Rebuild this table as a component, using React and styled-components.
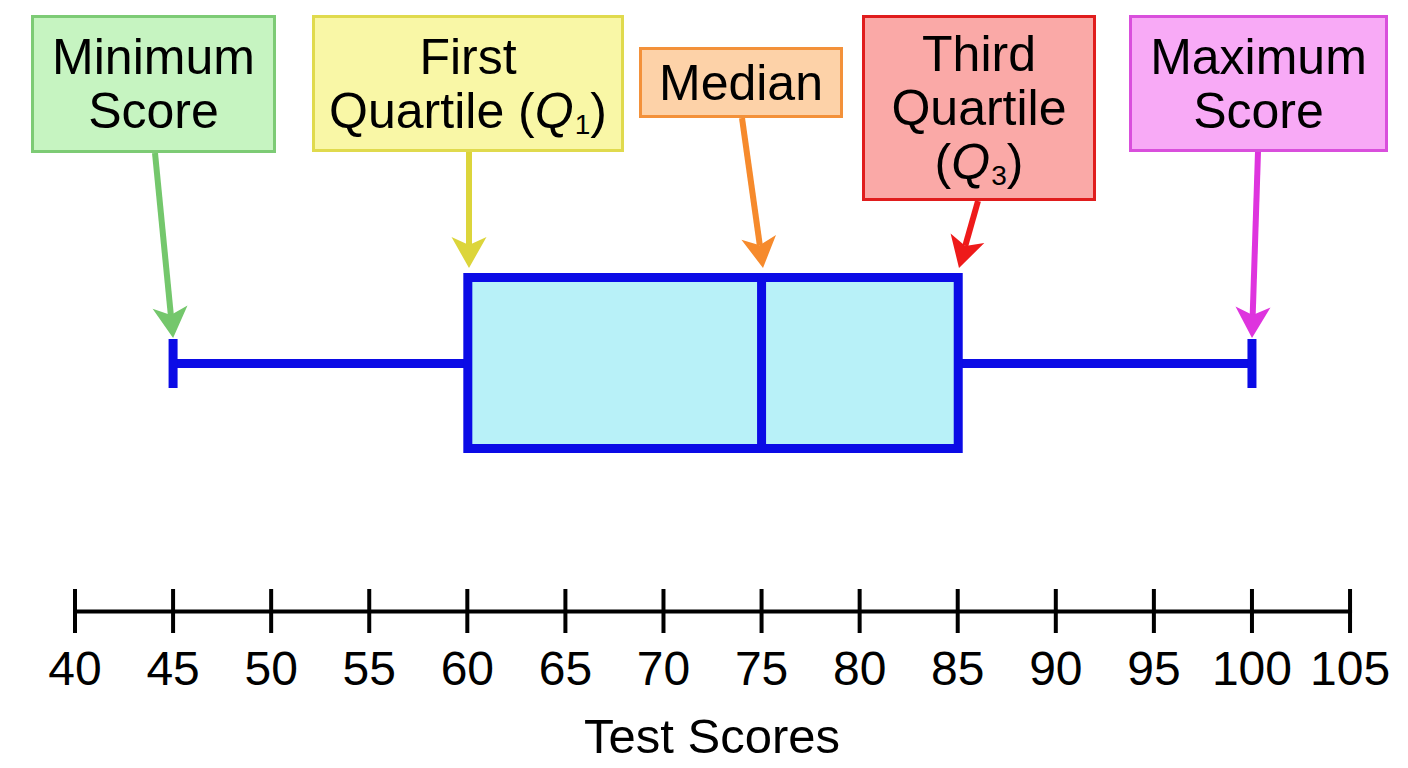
import React from 'react';
import styled, { createGlobalStyle } from 'styled-components';

const GlobalStyle = createGlobalStyle`
  html, body {
    margin: 0;
    padding: 0;
    background: #ffffff;
  }
  body {
    font-family: "Liberation Sans", Arial, Helvetica, sans-serif;
    color: #000;
  }
`;

const Page = styled.div`
  width: 1408px;
  height: 768px;
  display: flex;
  flex-direction: column;
  background: #ffffff;
  overflow: hidden;
`;

const Chart = styled.div`
  position: relative;
  height: 644px;
  flex: none;
`;

const Plot = styled.svg`
  display: block;
`;

// callouts sit on the chart canvas at the spot they point from
const Callout = styled.div`
  position: absolute;
  left: ${p => p.$left}px;
  top: ${p => p.$top}px;
  width: ${p => p.$width}px;
  height: ${p => p.$height}px;
  box-sizing: border-box;
  border: 3px solid ${p => p.$edge};
  background: ${p => p.$fill};
  display: flex;
  flex-direction: column;
  align-items: center;
  justify-content: center;
  font-size: 50px;
  line-height: 54px;
  text-align: center;
`;

const Line = styled.span`
  display: block;
  white-space: nowrap;
`;

const Q = styled.i`
  font-style: italic;
`;

const Sub = styled.sub`
  font-size: 28px;
  line-height: 0;
  vertical-align: -6px;
  margin-left: 1px;
`;

const TickRow = styled.div`
  display: flex;
  padding-left: 26px;
  height: 50px;
  flex: none;
`;

const TickLabel = styled.div`
  width: 98.08px;
  flex: none;
  text-align: center;
  font-size: 48px;
  line-height: 50px;
`;

const AxisTitle = styled.div`
  margin-top: 17px;
  padding-left: 16px;
  text-align: center;
  font-size: 49px;
  line-height: 50px;
`;

const X0 = 75;
const STEP = 98.08;
const xOf = v => X0 + ((v - 40) / 5) * STEP;

const ticks = [40, 45, 50, 55, 60, 65, 70, 75, 80, 85, 90, 95, 100, 105];

const callouts = [
  { left: 31, top: 15, width: 245, height: 138, fill: '#c6f4c1', edge: '#7dcb75', lines: ['Minimum', 'Score'] },
  { left: 312, top: 15, width: 312, height: 137, fill: '#f9f7a6', edge: '#e0da4d', lines: ['First', 'Q1'] },
  { left: 639, top: 47, width: 204, height: 71, fill: '#fdd2a8', edge: '#f3913a', lines: ['Median'] },
  { left: 862, top: 15, width: 234, height: 186, fill: '#faa9a7', edge: '#e01d1d', lines: ['Third', 'Quartile', 'Q3'] },
  { left: 1129, top: 15, width: 259, height: 137, fill: '#f8aaf6', edge: '#d94fdc', lines: ['Maximum', 'Score'] },
];

const arrows = [
  { from: [155, 153], to: [xOf(45), 338], color: '#74c76c' },
  { from: [469, 152], to: [469, 268], color: '#dcd53b' },
  { from: [742, 118], to: [763, 268], color: '#f68a2c' },
  { from: [978, 201], to: [959, 268], color: '#ee1a1a' },
  { from: [1258, 152], to: [xOf(100), 338], color: '#de34de' },
];

function arrowParts([x1, y1], [x2, y2]) {
  const dx = x2 - x1;
  const dy = y2 - y1;
  const len = Math.hypot(dx, dy);
  const ux = dx / len;
  const uy = dy / len;
  const px = -uy;
  const py = ux;
  const head = 31;
  const half = 17.5;
  const notch = 8;
  const bx = x2 - ux * head;
  const by = y2 - uy * head;
  const nx = x2 - ux * (head - notch);
  const ny = y2 - uy * (head - notch);
  const points = [
    [x2, y2],
    [bx + px * half, by + py * half],
    [nx, ny],
    [bx - px * half, by - py * half],
  ]
    .map(pt => pt.map(n => n.toFixed(1)).join(','))
    .join(' ');
  return { shaftEnd: [nx, ny], points };
}

function CalloutText({ line }) {
  if (line === 'Q1') {
    return (
      <Line>
        Quartile (<Q>Q</Q>
        <Sub>1</Sub>)
      </Line>
    );
  }
  if (line === 'Q3') {
    return (
      <Line>
        (<Q>Q</Q>
        <Sub>3</Sub>)
      </Line>
    );
  }
  return <Line>{line}</Line>;
}

function BoxPlot() {
  const blue = '#0b0be6';
  const left = xOf(60);
  const right = xOf(85);
  return (
    <Plot width="1408" height="644" viewBox="0 0 1408 644">
      {/* whiskers */}
      <line x1={xOf(45)} y1="363.5" x2={left} y2="363.5" stroke={blue} strokeWidth="9" />
      <line x1={right} y1="363.5" x2={xOf(100)} y2="363.5" stroke={blue} strokeWidth="9" />
      <line x1={xOf(45)} y1="339" x2={xOf(45)} y2="388" stroke={blue} strokeWidth="9" />
      <line x1={xOf(100)} y1="339" x2={xOf(100)} y2="388" stroke={blue} strokeWidth="9" />
      {/* box */}
      <rect
        x={left + 0.5}
        y="277.5"
        width={right - left}
        height="171"
        fill="#b8f1f8"
        stroke={blue}
        strokeWidth="9"
      />
      <line x1={xOf(75)} y1="277" x2={xOf(75)} y2="449" stroke={blue} strokeWidth="9" />

      {/* callout arrows */}
      {arrows.map((a, i) => {
        const { shaftEnd, points } = arrowParts(a.from, a.to);
        return (
          <g key={i}>
            <line
              x1={a.from[0]}
              y1={a.from[1]}
              x2={shaftEnd[0]}
              y2={shaftEnd[1]}
              stroke={a.color}
              strokeWidth="6"
            />
            <polygon points={points} fill={a.color} />
          </g>
        );
      })}

      {/* axis */}
      <line x1={X0 - 2} y1="611.5" x2={xOf(105) + 2} y2="611.5" stroke="#000" strokeWidth="4" />
      {ticks.map(t => (
        <line key={t} x1={xOf(t)} y1="589" x2={xOf(t)} y2="633" stroke="#000" strokeWidth="4" />
      ))}
    </Plot>
  );
}

export default function App() {
  return (
    <Page>
      <GlobalStyle />
      <Chart>
        <BoxPlot />
        {callouts.map((c, i) => (
          <Callout
            key={i}
            $left={c.left}
            $top={c.top}
            $width={c.width}
            $height={c.height}
            $fill={c.fill}
            $edge={c.edge}
          >
            {c.lines.map(l => (
              <CalloutText key={l} line={l} />
            ))}
          </Callout>
        ))}
      </Chart>
      <TickRow>
        {ticks.map(t => (
          <TickLabel key={t}>{t}</TickLabel>
        ))}
      </TickRow>
      <AxisTitle>Test Scores</AxisTitle>
    </Page>
  );
}
